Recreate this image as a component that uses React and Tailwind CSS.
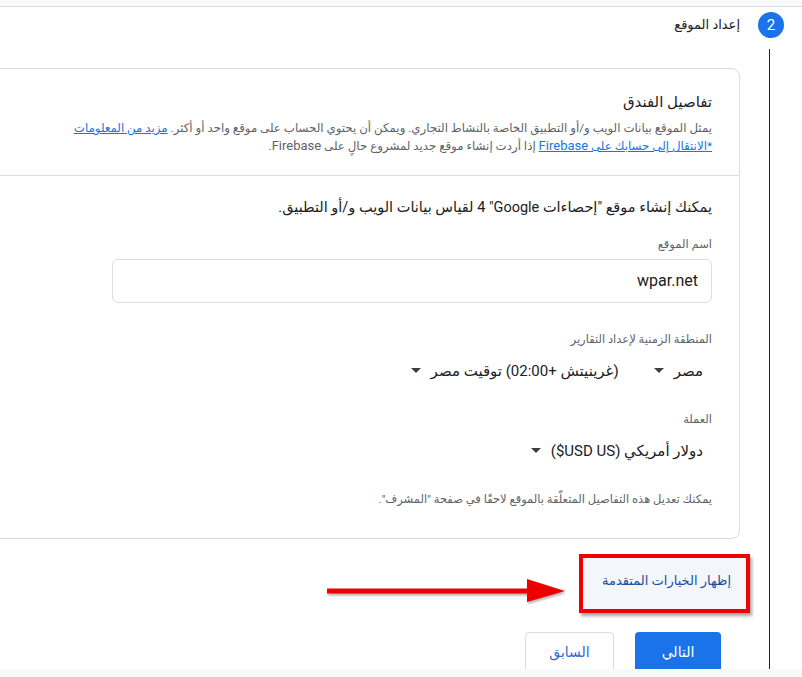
import React from "react";

function Caret() {
  return (
    <svg width="10" height="6" viewBox="0 0 10 6" className="shrink-0">
      <path d="M0 0 L10 0 L5 5 Z" fill="#3c4043" />
    </svg>
  );
}

export default function App() {
  return (
    <div
      dir="rtl"
      className="relative w-[802px] h-[677px] overflow-hidden bg-white text-[#202124]"
      style={{ fontFamily: "Roboto, 'DejaVu Sans', 'Noto Sans', sans-serif" }}
    >
      <div className="h-[6px] bg-[#f8f9fa]" />
      <div className="h-px bg-[#dadce0]" />

      {/* step header */}
      <div className="flex items-center gap-[18px] pr-[18px] mt-[5px]">
        <div className="w-[26px] h-[26px] rounded-full bg-[#1a73e8] text-white flex items-center justify-center text-[15px]">
          2
        </div>
        <div className="text-[13px] leading-[20px]">إعداد الموقع</div>
      </div>

      <div className="flex mt-[11px]">
        {/* rail */}
        <div dir="ltr" className="w-[57px] shrink-0 pl-[24px]">
          <div className="w-px h-[630px] bg-[#202124]" />
        </div>

        {/* content */}
        <div className="flex-1 pt-[19px]">
          <div className="mr-[5px] ml-[-20px] border border-[#dadce0] rounded-[8px]">
            <div className="pr-[27px] pt-[21px] pb-[20px] border-b border-[#dadce0]">
              <div className="text-[15px] leading-[24px]">تفاصيل الفندق</div>
              <div className="mt-[6px] text-[11.8px] leading-[17px] text-[#5f6368] whitespace-nowrap">
                <div>
                  يمثل الموقع بيانات الويب و/أو التطبيق الخاصة بالنشاط التجاري. ويمكن أن يحتوي الحساب على موقع واحد أو أكثر.{" "}
                  <span className="text-[#1a73e8] underline">مزيد من المعلومات</span>
                </div>
                <div>
                  <span className="text-[#1a73e8] underline">
                    *الانتقال إلى حسابك على <span className="text-[13px]">Firebase</span>
                  </span>{" "}
                  إذا أردت إنشاء موقع جديد لمشروع حالٍ على <span className="text-[13px]">Firebase</span>.
                </div>
              </div>
            </div>

            <div className="pr-[27px] pt-[21px] pb-[31px]">
              <div className="text-[14.5px] leading-[22px] whitespace-nowrap">
                يمكنك إنشاء موقع "إحصاءات <bdi>Google</bdi>" <bdi>4</bdi> لقياس بيانات الويب و/أو التطبيق.
              </div>

              <div className="mt-[17px] text-[11.5px] leading-[16px] text-[#5f6368]">اسم الموقع</div>
              <div className="mt-[7px] w-[600px] h-[44px] border border-[#dadce0] rounded-[6px] flex items-center pr-[13px]">
                <span dir="ltr" className="text-[16px]">wpar.net</span>
              </div>

              <div className="mt-[28px] text-[11.5px] leading-[16px] text-[#5f6368]">المنطقة الزمنية لإعداد التقارير</div>
              <div className="mt-[12px] h-[24px] flex items-center pr-[9px] text-[15px]">
                <div className="flex items-center gap-[10px]">
                  <span>مصر</span>
                  <Caret />
                </div>
                <div className="flex items-center gap-[10px] mr-[35px]">
                  <span>(غرينيتش +02:00) توقيت مصر</span>
                  <Caret />
                </div>
              </div>

              <div className="mt-[28px] text-[11.5px] leading-[16px] text-[#5f6368]">العملة</div>
              <div className="mt-[12px] h-[24px] flex items-center pr-[9px] text-[15px]">
                <div className="flex items-center gap-[10px]">
                  <span>
                    دولار أمريكي (<bdi dir="ltr">$USD US</bdi>)
                  </span>
                  <Caret />
                </div>
              </div>

              <div className="mt-[28px] text-[11.5px] leading-[16px] text-[#5f6368]">
                يمكنك تعديل هذه التفاصيل المتعلّقة بالموقع لاحقًا في صفحة "المشرف".
              </div>
            </div>
          </div>

          {/* advanced options + arrow */}
          <div className="flex items-start mt-[15px] mr-[-5px]">
            <div className="shrink-0 w-[171px] h-[59px] border-[4px] border-[#f00000] shadow-[2px_3px_3px_rgba(0,0,0,0.35)] bg-[#f3f6fb] flex items-center pr-[15px] pb-[5px]">
              <span className="text-[13px] text-[#1a4d9e]">إظهار الخيارات المتقدمة</span>
            </div>
            <svg
              width="238"
              height="28"
              viewBox="0 0 238 28"
              className="shrink-0 mt-[23px] mr-[14px] drop-shadow-[1px_2px_1px_rgba(0,0,0,0.3)]"
            >
              <rect x="0" y="11.5" width="204" height="5" fill="#ee0000" />
              <polygon points="200,2 238,14 200,25" fill="#ee0000" />
            </svg>
          </div>

          {/* buttons */}
          <div className="flex gap-[21px] mt-[19px] mr-[24px]">
            <div className="w-[86px] h-[44px] rounded-[4px] bg-[#1a73e8] text-white text-[14px] flex items-center justify-center pb-[4px]">
              التالي
            </div>
            <div className="w-[89px] h-[44px] rounded-[4px] border border-[#dadce0] text-[#3367d6] text-[14px] flex items-center justify-center pb-[4px]">
              السابق
            </div>
          </div>
        </div>
      </div>

      <div className="absolute bottom-0 left-0 right-0 h-[8px] bg-[#f8f9fa]" />
    </div>
  );
}
